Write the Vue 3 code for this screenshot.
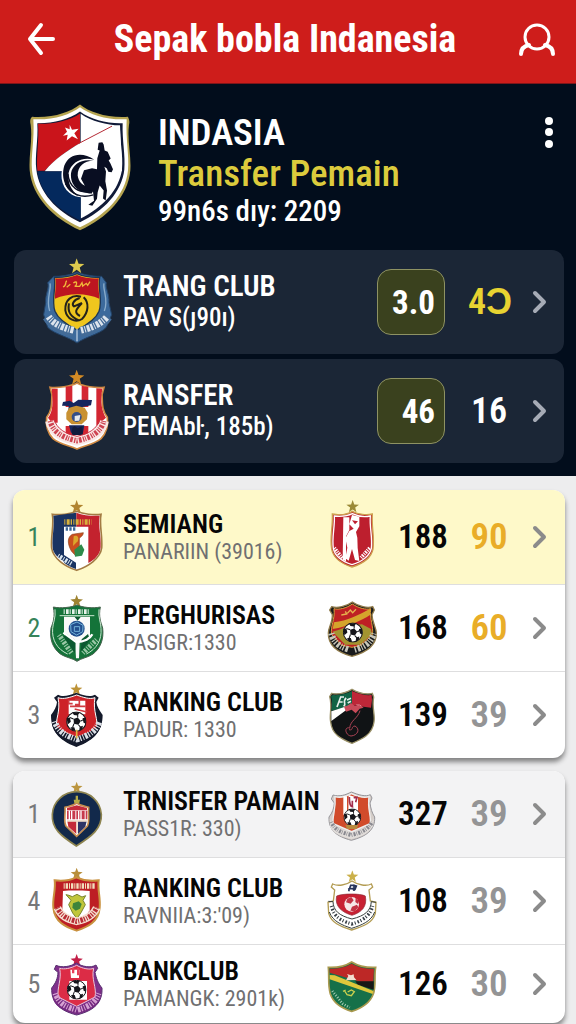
<script setup>
const featured = [
  { crest: 'crest-trang', name: 'TRANG CLUB', detail: 'PAV S(ȷ90ı)', score: '3.0', value: '4Ɔ', gold: true },
  { crest: 'crest-ransfer', name: 'RANSFER', detail: 'PEMAbŀ, 185b)', score: '46', value: '16', gold: false },
]

const groups = [
  {
    id: 'ranking',
    rows: [
      { rank: 1, crest: 'crest-semiang', name: 'SEMIANG', detail: 'PANARIIN (39016)', badge: 'badge-player', points: 188, value: 90, tone: 'gold', green: true },
      { rank: 2, crest: 'crest-perghurisas', name: 'PERGHURISAS', detail: 'PASIGR:1330', badge: 'badge-stripe', points: 168, value: 60, tone: 'gold', green: true },
      { rank: 3, crest: 'crest-ranking', name: 'RANKING CLUB', detail: 'PADUR: 1330', badge: 'badge-tricolor', points: 139, value: 39, tone: 'grey' },
    ],
  },
  {
    id: 'transfer',
    rows: [
      { rank: 1, crest: 'crest-navy', name: 'TRNISFER PAMAIN', detail: 'PASS1R: 330)', badge: 'badge-orange', points: 327, value: 39, tone: 'grey' },
      { rank: 4, crest: 'crest-gold', name: 'RANKING CLUB', detail: "RAVNIIA:3:'09)", badge: 'badge-white', points: 108, value: 39, tone: 'grey' },
      { rank: 5, crest: 'crest-purple', name: 'BANKCLUB', detail: 'PAMANGK: 2901k)', badge: 'badge-green', points: 126, value: 30, tone: 'grey' },
    ],
  },
]
</script>

<template>
  <div class="page">
    <svg class="sprite" aria-hidden="true">
      <symbol id="star" viewBox="0 0 40 40">
        <path d="M20 0 25 14 40 15 28 24 32 39 20 30 8 39 12 24 0 15 15 14Z" />
      </symbol>
      <symbol id="ball" viewBox="0 0 60 60">
        <circle cx="30" cy="30" r="28" fill="#fff" stroke="#15151b" stroke-width="3" />
        <path fill="#15151b" d="M22 22 34 18 43 28 36 39 23 36ZM18 3 40 3 34 12 23 11ZM2 20 11 18 14 30 5 38ZM57 18 48 20 51 33 58 36ZM13 46 24 46 28 57 18 55ZM40 45 49 42 48 51 38 57Z" />
        <path fill="none" stroke="#15151b" stroke-width="3" d="M22 22 11 18M34 18 34 10M43 28 51 24M36 39 42 46M23 36 19 47" />
      </symbol>

      <symbol id="crest-main" viewBox="57 42 306 380">
        <path fill="#b5a450" d="M210 43C238 66 292 84 354 80 356 86 360 92 357 104 351 150 364 196 361 240 354 320 290 384 210 420 130 384 66 320 59 240 56 196 68 150 62 104 59 92 61 86 66 80 130 84 180 66 210 43Z" />
        <path fill="#fff" d="M210 51C240 74 294 90 350 87 347 150 358 196 354 240 347 314 286 376 210 411 134 376 73 314 66 240 62 196 74 150 70 87 128 90 180 74 210 51Z" />
        <path fill="#101a38" d="M210 64C242 88 294 101 338 99 336 150 347 196 343 238 336 306 280 364 210 396 140 364 86 306 79 238 74 196 85 150 82 99 128 100 178 88 210 64Z" />
        <path fill="#fff" d="M212 71C244 94 290 105 330 106 329 150 340 196 336 236 329 300 276 354 212 385Z" />
        <path fill="#ca141b" d="M210 70V159C166 184 134 208 104 242H82C78 196 88 150 84 101 130 102 180 92 210 70Z" />
        <path fill="#fff" d="M212 158 304 108 330 106 336 243H104C134 208 170 182 212 158Z" />
        <path fill="none" stroke="#b52b36" stroke-width="3" d="M206 160 306 108" />
        <path fill="#04295d" d="M82 244H212V391C140 358 92 310 82 244Z" />
        <path fill="#fff" d="M179 104 186 119 206 116 193 129 204 147 186 138 170 151 173 134 159 137 171 125 165 112 179 117Z" />
        <path fill="#fff" d="M254 203C190 174 149 212 155 266 162 315 210 334 252 314Z" />
        <path fill="#090e22" d="M253 209C216 182 176 192 163 226 151 266 168 304 206 318 182 300 172 276 176 248 183 216 218 198 253 209Z" />
        <path fill="#090e22" d="M250 212C216 205 188 222 183 249 180 285 205 309 246 310L254 282C226 297 207 281 203 256 203 229 222 212 250 212Z" />
        <path fill="none" stroke="#090e22" stroke-width="4" d="M166 280C182 312 214 326 250 314M174 252C177 290 205 313 250 302" />
        <path fill="#090e22" d="M265 164 266 158 277 156 281 163 284 181 293 185 302 205 296 211 301 219 309 237 305 246 295 245 290 234 283 230 288 244 286 273 291 301 287 331 279 325 281 301 269 286 263 306 261 326 247 347 235 344 252 332 249 304 227 291 213 266 222 240 246 234 261 237 262 204 269 181 263 179Z" />
      </symbol>

      <symbol id="crest-trang" viewBox="124 53 216 270">
        <use href="#star" x="208" y="57" width="46" height="46" fill="#ddca4e" />
        <path fill="#3c6a9c" stroke="#234266" stroke-width="3" d="M232 98C255 108 290 112 306 111L320 130C316 145 330 165 328 190L336 226 320 264C300 285 258 292 232 311 206 292 164 285 144 264L132 226 138 190C136 165 150 145 144 130L162 111C180 112 210 108 232 98Z" />
        <path fill="none" stroke="#8aaccb" stroke-width="4" d="M151 132C156 150 138 180 150 215M313 132C308 150 328 180 314 215" />
        <path fill="#efc61e" stroke="#1c3556" stroke-width="4" d="M232 103C256 113 284 115 300 114 294 150 310 182 298 216 288 242 258 259 232 272 206 259 176 242 166 216 154 182 170 150 164 114 180 115 210 112 232 103Z" />
        <path fill="#bd1520" d="M232 107C256 117 282 119 297 117 293 140 299 158 299 178 262 160 204 160 166 178 165 158 171 140 167 117 184 119 210 116 232 107Z" />
        <path fill="none" stroke="#f1b83a" stroke-width="4" d="M190 143C204 137 194 126 202 125M201 144 212 135M221 131C236 121 231 139 225 141H240L247 130 249 140 260 132 264 138 271 127" />
        <path fill="none" stroke="#24221c" stroke-width="6" d="M244 172C217 164 195 182 197 213 201 238 226 252 247 239 267 219 269 190 252 174M240 176C219 183 216 196 223 201L247 191M247 191C228 211 222 220 241 230M208 192C202 221 216 233 238 243" />
        <path fill="none" stroke="#436b97" stroke-width="30" d="M143 232C157 256 183 270 222 278M242 278C282 270 307 256 324 232" />
        <path fill="none" stroke="#dce4ed" stroke-width="20" stroke-dasharray="7 4 3 4 9 3" d="M147 232C161 253 187 265 222 273M244 273C278 265 306 252 322 232" />
        <path stroke="#b7cbdf" stroke-width="4" d="M232 268V306" />
      </symbol>

      <symbol id="crest-ransfer" viewBox="124 380 216 270">
        <use href="#star" x="208" y="391" width="46" height="46" fill="#d38b25" />
        <path fill="#fff" stroke="#d18a43" stroke-width="5" d="M232 431C250 441 290 447 313 444L307 466C309 486 304 510 323 534 326 558 321 580 304 598 286 614 257 618 232 629 207 618 178 614 160 598 143 580 138 558 141 534 160 510 155 486 157 466L151 444C174 447 214 441 232 431Z" />
        <path fill="#d32631" d="M156 448 174 448V550L156 550 145 535C161 515 160 490 156 448ZM198 442 218 439V590H198ZM246 439 266 443V590H246ZM290 447 308 448C301 490 307 515 319 535L290 560Z" />
        <path fill="#fff" d="M190 503H274V560H190Z" />
        <path fill="#15265e" d="M190 488 210 484 222 491 236 481 277 482 274 498 248 503 252 515 206 515 207 500 187 499ZM208 558 254 558 250 580 214 580Z" />
        <path fill="#c99132" d="M209 505 230 499 255 505 264 520 262 540 246 555H216L200 540V520Z" />
        <circle cx="231" cy="533" r="15" fill="#344e88" />
        <path fill="#e5e9ef" d="M225 530 242 527 239 544 225 545Z" />
        <path fill="#111b3c" d="M218 565 225 560 234 567 248 560 250 587H216Z" />
        <path fill="none" stroke="#f9e8e5" stroke-width="27" d="M150 545C156 576 184 596 232 605 280 596 308 576 314 545" />
        <path fill="none" stroke="#ce4452" stroke-width="16" stroke-dasharray="3 4 8 4 4 3" d="M152 545C158 576 188 596 232 604 276 596 306 575 312 545" />
        <path fill="none" stroke="#ca3043" stroke-width="3" d="M162 538C172 570 197 583 232 591 267 583 292 570 302 538" />
      </symbol>

      <symbol id="crest-semiang" viewBox="142 57 180 228">
        <use href="#star" x="211" y="60" width="40" height="40" fill="#b18530" />
        <path fill="#fff" stroke="#a37b43" stroke-width="5" d="M231 94C250 102 282 106 304 103 298 134 309 166 306 204 302 236 264 260 231 271 198 260 160 236 156 204 153 166 164 134 158 103 180 106 212 102 231 94Z" />
        <path fill="#193362" d="M161 107 230 98V140H193V245C174 233 160 220 159 202 157 166 165 140 161 107Z" />
        <path fill="#c3222e" d="M230 98C250 106 282 109 300 107 295 140 305 166 303 202 301 225 284 240 266 249V140H230Z" />
        <path fill="#193362" d="M193 225 229 248V267C215 263 203 255 193 248Z" />
        <path fill="none" stroke="#d7b13c" stroke-width="16" stroke-dasharray="3 4 9 3 4 4" d="M194 126H276" />
        <path fill="none" stroke="#3e6896" stroke-width="10" stroke-dasharray="7 4" d="M198 147H229" />
        <path fill="#ca4e1f" stroke="#8d451e" stroke-width="2" d="M215 213C203 191 202 172 218 163L251 158C250 171 239 170 239 177L239 217 225 224Z" />
        <path fill="#dba72c" d="M222 169C234 164 239 173 234 184L220 198Z" />
        <path fill="#2e8a4a" d="M224 209 245 193 254 209 247 227 226 230Z" />
        <path fill="none" stroke="#d9e5ee" stroke-width="14" stroke-dasharray="3 4 7 4" d="M175 227 215 251" />
      </symbol>

      <symbol id="crest-perghurisas" viewBox="142 333 180 228">
        <use href="#star" x="211" y="347" width="40" height="38" fill="#9f8432" />
        <path fill="#147339" stroke="#46624d" stroke-width="3" d="M232 378C248 385 280 389 302 384 296 414 304 430 309 447 313 482 302 508 280 525 264 536 246 537 232 547 218 537 198 536 182 525 160 508 149 482 154 447 160 430 167 414 161 384 183 389 216 385 232 378Z" />
        <path fill="none" stroke="#cae6d0" stroke-width="3" d="M166 391C169 416 160 431 159 448 156 483 172 510 204 525M298 391C295 416 304 431 304 448 307 483 291 510 260 525M180 410H284" />
        <path fill="none" stroke="#e7f2ea" stroke-width="14" stroke-dasharray="3 4 8 3" d="M192 398H270" />
        <path fill="#f9faf9" d="M193 413H271V476L240 488 238 538H229L226 486 193 470Z" />
        <path fill="#0b5830" d="M225 414H243L234 425ZM197 463 228 484 226 523C210 502 202 486 191 475ZM265 465 246 481 243 520 271 482Z" />
        <circle cx="231" cy="449" r="24" fill="#214e8d" />
        <path fill="none" stroke="#74b3d9" stroke-width="3" d="M213 437 232 429 250 439 249 458 231 468 214 458ZM224 443H240V457H224Z" />
        <path fill="none" stroke="#fff" stroke-width="7" d="M191 461 230 489M230 489C254 489 272 478 278 466" />
        <path fill="none" stroke="#9ac7a6" stroke-width="15" stroke-dasharray="3 4 7 4" d="M178 468 215 522M250 522 292 481" />
      </symbol>

      <symbol id="crest-ranking" viewBox="142 592 180 228">
        <use href="#star" x="211" y="611" width="38" height="36" fill="#bd9338" />
        <path fill="#141a2b" d="M230 639C250 646 270 654 286 645L297 654 290 667C291 681 300 692 309 706 308 752 288 780 230 802 174 780 154 752 154 706 164 692 171 681 172 667L163 654 175 645C190 654 210 646 230 639Z" />
        <path fill="#cd2228" stroke="#fff" stroke-width="3" d="M231 646C250 653 270 660 286 654 278 696 298 720 290 747L232 776 171 745C166 718 184 696 175 654 191 660 212 653 231 646Z" />
        <path fill="#fff" d="M207 663H257V704H207Z" />
        <path fill="none" stroke="#d13b42" stroke-width="5" d="M207 660V672H219M226 659H239V675H226M211 680H258M225 688 262 697" />
        <use href="#ball" x="199" y="695" width="62" height="62" />
        <path fill="#141a2b" d="M156 709C166 748 194 761 231 771 270 761 299 745 307 709L304 738C295 767 265 788 231 799 196 788 166 767 158 738Z" />
        <path fill="none" stroke="#dce0e6" stroke-width="18" stroke-dasharray="3 4 8 3 4 5" d="M165 725C176 758 201 768 231 779 264 769 290 756 299 725" />
        <path stroke="#dfb541" stroke-width="5" d="M231 750V776" />
      </symbol>

      <symbol id="crest-navy" viewBox="142 48 180 228">
        <use href="#star" x="212" y="65" width="38" height="35" fill="#bb953f" />
        <path fill="#12294b" stroke="#8d8450" stroke-width="5" d="M231 95C270 95 302 124 305 163 307 206 276 229 230 258 185 229 155 206 158 163 160 124 193 95 231 95Z" />
        <path fill="#fff" stroke="#c78d50" stroke-width="5" d="M231 129C244 139 257 139 267 142 265 165 271 183 263 198L231 229 199 198C191 183 198 165 196 142 207 139 219 139 231 129Z" />
        <path fill="#c42b3a" d="M202 144 231 136 262 144V151H202ZM203 184H230V222L206 200Z" />
        <path fill="#2e3566" d="M235 184H261L257 200 235 222Z" />
        <path fill="none" stroke="#c7394c" stroke-width="25" stroke-dasharray="5 4 3 4 9 3" d="M202 165H265" />
        <path fill="none" stroke="#ead5c1" stroke-width="4" d="M202 183H262M232 183V219" />
        <path fill="#b6ab46" d="M222 119H241L239 129H224ZM228 107H235V122H228Z" />
      </symbol>

      <symbol id="crest-gold" viewBox="142 307 180 228">
        <use href="#star" x="212" y="321" width="38" height="36" fill="#b88f3c" />
        <path fill="#bd1e24" stroke="#c9913f" stroke-width="6" d="M230 350C250 359 278 362 297 359 293 388 303 410 300 441 297 485 263 499 231 510 198 499 165 485 161 441 158 410 169 388 165 359 187 362 211 359 230 350Z" />
        <path fill="none" stroke="#f2dfbd" stroke-width="16" stroke-dasharray="3 3 7 3" d="M192 376H286" />
        <path fill="#fff" d="M190 391C210 389 240 389 270 391V449L258 467 231 477 204 467 188 449Z" />
        <path fill="#c0c63a" stroke="#7a8630" stroke-width="3" d="M208 404 218 408 232 401 247 409 258 405 250 419 257 432 244 456 232 474 219 457 207 432 214 419 199 402Z" />
        <path fill="#3d843b" d="M220 428 237 422 246 430 241 444 228 450 218 441Z" />
        <path fill="none" stroke="#f5dfd0" stroke-width="23" d="M173 441C184 467 204 476 231 482 263 476 282 464 291 441" />
        <path fill="none" stroke="#b82c34" stroke-width="15" stroke-dasharray="3 4 8 3 4 4" d="M173 441C184 467 206 476 231 482 262 476 281 464 291 441" />
      </symbol>

      <symbol id="crest-purple" viewBox="142 555 180 228">
        <use href="#star" x="211" y="579" width="40" height="37" fill="#c31f48" />
        <path fill="#80308b" stroke="#573070" stroke-width="3" d="M230 606C248 617 273 622 289 612L294 622 286 634C290 652 294 665 307 681 309 722 287 748 231 762 176 748 155 722 156 681 169 665 174 652 175 634L164 625 169 613C187 621 212 617 230 606Z" />
        <path fill="#dc2c46" stroke="#e9c7da" stroke-width="3" d="M231 613C249 623 270 627 282 622 274 655 292 680 286 708L231 736 176 708C171 680 187 655 180 622 194 626 213 622 231 613Z" />
        <path fill="#fff" d="M212 626H239L238 651H214ZM209 660H262V716H209Z" />
        <path fill="#e7405a" d="M217 621H224V637H217ZM232 621H238V643H232Z" />
        <use href="#ball" x="201" y="656" width="60" height="60" />
        <path fill="#742a80" d="M158 684C167 719 197 730 231 738 267 730 294 717 304 684L302 714C290 742 263 752 231 759 199 752 170 742 160 714Z" />
        <path fill="none" stroke="#d6a1d2" stroke-width="17" stroke-dasharray="3 4 8 3 4 5" d="M167 697C178 730 202 738 231 747 264 738 287 727 297 697" />
      </symbol>

      <symbol id="badge-player" viewBox="84 57 162 228">
        <use href="#star" x="147" y="60" width="40" height="38" fill="#9b8a36" />
        <path fill="#bd1f2e" stroke="#cda04e" stroke-width="4" d="M166 94C183 104 210 106 226 102 223 142 233 170 228 207 222 237 197 251 165 261 134 251 109 237 104 207 98 170 108 142 106 102 125 106 150 104 166 94Z" />
        <path fill="none" stroke="#fff" stroke-width="4" d="M166 101C185 110 208 111 220 108 217 142 227 170 223 205 217 231 193 245 165 254 138 245 114 231 109 205 104 170 114 142 112 108 130 110 150 109 166 101Z" />
        <path fill="#fff" d="M139 112H157V150L147 169V244L137 239ZM165 105 187 110V139L177 156 181 173 182 204 187 243 174 240 165 207 155 242 145 235 151 203 145 175 157 153 170 146 157 133Z" />
        <path fill="#bd1f2e" d="M165 121 183 124 174 133Z" />
        <path fill="none" stroke="#fff" stroke-width="11" stroke-dasharray="3 3 5 3" d="M112 204 136 234M192 233 219 203" />
      </symbol>

      <symbol id="badge-stripe" viewBox="84 333 162 228">
        <path fill="#181a1c" stroke="#907b4b" stroke-width="4" d="M166 369C186 383 211 388 227 383L232 393 225 407C225 430 238 446 238 462 239 500 206 521 165 532 124 521 93 500 94 462 94 446 107 430 106 407L98 393 104 383C121 388 147 383 166 369Z" />
        <path fill="#be2024" stroke="#d69f3c" stroke-width="3" d="M166 375C186 388 207 393 221 389 217 421 231 443 226 467L192 499 165 505 134 499 104 467C99 443 115 421 111 389 125 393 148 388 166 375Z" />
        <path fill="#d5a42c" d="M111 430C150 425 187 407 219 389V408C192 425 154 443 107 450Z" />
        <path fill="#a39430" d="M107 458C135 450 140 446 150 440L195 436 222 450 225 466 190 497H145Z" />
        <path fill="none" stroke="#e6b34e" stroke-width="4" d="M133 408 149 405 145 397M151 403 160 393 167 401 177 391" />
        <use href="#ball" x="137" y="430" width="61" height="61" />
        <path fill="none" stroke="#c7c6b9" stroke-width="19" stroke-dasharray="4 5 8 4 3 4" d="M103 463C110 492 130 504 157 512M173 512C204 503 223 490 230 463" />
      </symbol>

      <symbol id="badge-tricolor" viewBox="84 592 162 228">
        <path fill="#101315" stroke="#9a9167" stroke-width="4" d="M165 629C184 640 207 645 226 641L230 652C224 683 235 706 231 727 226 765 196 778 165 791 132 778 105 765 101 727 96 706 107 683 98 651L104 641C123 645 146 640 165 629Z" />
        <path fill="#126345" d="M165 634V680L103 693C106 680 106 664 102 650L107 646C126 648 147 643 165 634Z" />
        <path fill="#bd2738" d="M165 634C186 644 208 648 224 646L225 661 222 684 165 677Z" />
        <path fill="#fff" d="M103 695 163 675 157 684 103 724ZM176 675H188L196 681Z" />
        <path fill="none" stroke="#e8efeb" stroke-width="5" d="M120 682 131 652H141M126 667H137M140 680C151 670 134 672 147 654M150 661 162 656M152 670 162 665" />
        <path fill="#c94b5a" d="M141 681 154 677 162 670 174 679 188 676 200 684 188 687 176 701 164 690 147 696Z" />
        <path fill="none" stroke="#ab4355" stroke-width="3" d="M189 693C182 718 160 721 158 746M158 745C140 740 145 767 162 769 183 767 190 748 174 739 161 740 170 754 156 750" />
      </symbol>

      <symbol id="badge-orange" viewBox="84 48 162 228">
        <path fill="#d5cec9" stroke="#96959a" stroke-width="3" d="M163 96C185 105 206 111 220 104L225 114 219 129C221 145 225 159 233 171 235 211 207 229 163 241 119 229 94 211 96 171 106 159 111 145 112 129L103 117 108 105C127 111 146 105 163 96Z" />
        <path fill="#d14b2b" stroke="#eee" stroke-width="4" d="M163 101C183 110 203 115 216 110 210 151 225 170 219 191L164 215 109 191C104 170 118 151 114 110 128 114 147 110 163 101Z" />
        <path fill="#fff" d="M139 109H150V164H139ZM155 105 183 113V156H154Z" />
        <path fill="none" stroke="#a32d4c" stroke-width="5" d="M157 111C157 131 160 142 169 141M170 113 180 112 176 127M166 122V139" />
        <use href="#ball" x="139" y="145" width="54" height="54" />
        <path fill="#e1ddda" d="M98 175C105 202 134 209 164 217 200 209 223 198 230 175L228 198C212 223 193 230 163 237 132 230 109 221 99 201Z" />
        <path fill="#b78a3f" d="M145 195H184L179 207H150Z" />
        <path fill="none" stroke="#88888f" stroke-width="12" stroke-dasharray="2 4 6 3" d="M103 186C115 213 136 218 163 225 197 217 214 207 225 186" />
      </symbol>

      <symbol id="badge-white" viewBox="84 307 162 228">
        <use href="#star" x="146" y="329" width="40" height="36" fill="#cbb04a" />
        <path fill="#fff" stroke="#b39c53" stroke-width="4" d="M165 361C184 374 208 377 223 370L227 379 216 388 220 421 237 425 235 458C227 486 201 497 164 508 128 497 103 486 95 458L93 425 109 421 113 388 103 379 107 370C123 377 147 374 165 361Z" />
        <path fill="none" stroke="#26345b" stroke-width="5" d="M155 392 161 374H171V391M153 385 170 383M168 373 178 376 174 386 167 386" />
        <path fill="#c82133" stroke="#8c2933" stroke-width="2" d="M119 406C137 398 190 398 205 406 211 437 195 455 165 464 135 455 112 437 119 406Z" />
        <circle cx="164" cy="431" r="22" fill="#f6e8e8" />
        <path fill="#c33445" d="M151 414 163 409 170 419 161 429 147 425ZM165 438 180 432 184 440 174 452 160 450ZM176 412 186 422 183 430 175 424Z" />
        <path fill="none" stroke="#38403c" stroke-width="3" d="M94 422 108 423C109 450 126 465 165 475 205 465 221 450 223 423L237 425M97 454C107 482 134 493 164 503 195 493 223 482 233 454" />
        <path fill="none" stroke="#343c43" stroke-width="10" stroke-dasharray="3 6 5 5" d="M103 436C112 472 136 481 164 490 200 480 220 463 227 436" />
      </symbol>

      <symbol id="badge-green" viewBox="84 555 162 228">
        <path fill="#167049" stroke="#a9994f" stroke-width="5" d="M164 603C185 616 213 620 236 619 231 646 238 673 229 699 218 729 193 742 164 751 134 742 110 729 100 699 92 673 97 646 94 619 117 620 144 616 164 603Z" />
        <path fill="#bd2826" d="M164 608C185 620 213 624 231 623L229 662H190L98 635V623C120 623 144 620 164 608Z" />
        <path fill="#191816" d="M175 661H230V686L182 671Z" />
        <path fill="#dfc73b" d="M98 642 113 643 229 690 227 699 98 655Z" />
        <path fill="#f3ded0" d="M147 658 154 645 150 639 162 643 170 640 171 649 178 657Z" />
        <path fill="none" stroke="#c8cf4e" stroke-width="4" d="M143 690 150 701 163 704 172 692 163 687 152 693M138 691 146 687" />
        <path fill="none" stroke="#a7cdb5" stroke-width="8" stroke-dasharray="3 5" d="M106 690 137 728 158 740" />
      </symbol>
    </svg>

    <header class="topbar">
      <button class="icon-button" type="button" aria-label="Back">
        <svg width="30" height="34" viewBox="0 0 30 34"><path d="M15 3 4 17 15 31M4 17H27" fill="none" stroke="#fff" stroke-width="4" stroke-linecap="round" stroke-linejoin="round" /></svg>
      </button>
      <h1>Sepak bobla Indanesia</h1>
      <button class="icon-button" type="button" aria-label="Profile">
        <svg width="38" height="38" viewBox="0 0 38 38"><g fill="none" stroke="#fff" stroke-linecap="round"><circle cx="19" cy="17" r="12" stroke-width="3" /><path d="M3 34C3 29 6 26 11 25M35 34C35 29 32 26 27 25" stroke-width="4" /></g></svg>
      </button>
    </header>

    <section class="hero">
      <div class="club">
        <svg class="club-crest" aria-hidden="true"><use href="#crest-main" /></svg>
        <div class="club-text">
          <h2>INDASIA</h2>
          <p class="club-subtitle">Transfer Pemain</p>
          <p class="club-meta">99n6s dıy: 2209</p>
        </div>
        <button class="icon-button menu" type="button" aria-label="More options">
          <svg width="10" height="32" viewBox="0 0 10 32" fill="#fff"><circle cx="5" cy="5" r="4" /><circle cx="5" cy="16" r="4" /><circle cx="5" cy="28" r="4" /></svg>
        </button>
      </div>

      <ul class="featured">
        <li v-for="item in featured" :key="item.name">
          <a class="featured-row" href="#">
            <svg class="featured-crest" aria-hidden="true"><use :href="'#' + item.crest" /></svg>
            <span class="label">
              <strong>{{ item.name }}</strong>
              <span>{{ item.detail }}</span>
            </span>
            <span class="score">{{ item.score }}</span>
            <span class="value" :class="{ bright: item.gold }">{{ item.value }}</span>
            <svg class="chevron" viewBox="0 0 16 24"><path d="M3 3 12 12 3 21" /></svg>
          </a>
        </li>
      </ul>
    </section>

    <section class="tables">
      <ol v-for="group in groups" :key="group.id" class="table-card" :class="group.id">
        <li v-for="row in group.rows" :key="row.rank">
          <a class="row" href="#">
            <span class="rank" :class="{ green: row.green }">{{ row.rank }}</span>
            <svg class="crest" aria-hidden="true"><use :href="'#' + row.crest" /></svg>
            <span class="label">
              <strong>{{ row.name }}</strong>
              <span>{{ row.detail }}</span>
            </span>
            <svg class="badge" aria-hidden="true"><use :href="'#' + row.badge" /></svg>
            <span class="points">{{ row.points }}</span>
            <span class="value" :class="row.tone">{{ row.value }}</span>
            <svg class="chevron" viewBox="0 0 16 24"><path d="M3 3 12 12 3 21" /></svg>
          </a>
        </li>
      </ol>
    </section>
  </div>
</template>

<style>
body {
  background: #ededee;
}
</style>

<style scoped>
.page {
  font-family: 'Roboto Condensed', Roboto, 'Liberation Sans', sans-serif;
  color: #060606;
}

.sprite {
  position: absolute;
  width: 0;
  height: 0;
}

h1,
h2,
p,
ul,
ol {
  margin: 0;
  padding: 0;
}

ul,
ol {
  list-style: none;
}

a {
  color: inherit;
  text-decoration: none;
}

svg {
  display: block;
}

.icon-button {
  display: grid;
  place-items: center;
  padding: 0;
  border: 0;
  background: none;
  cursor: pointer;
}

.topbar {
  display: flex;
  align-items: center;
  justify-content: space-between;
  height: 84px;
  padding: 0 20px 6px 26px;
  box-sizing: border-box;
  border-bottom: 1px solid #7e1519;
  background: #ce1d1b;
}

h1 {
  padding-right: 4px;
  color: #fff;
  font-size: 38px;
  line-height: 44px;
  font-weight: 700;
  white-space: nowrap;
}

.hero {
  padding: 16px 12px 13px 14px;
  background: #020d1c;
}

.club {
  display: flex;
  align-items: flex-start;
  padding: 4px 10px 19px 15px;
}

.club-crest {
  width: 102px;
  height: 127px;
}

.club-text {
  flex: 1;
  padding: 8px 0 0 27px;
  color: #fff;
}

h2 {
  font-size: 37px;
  line-height: 42px;
  font-weight: 600;
}

.club-subtitle {
  color: #dccb3c;
  font-size: 37px;
  line-height: 40px;
  font-weight: 500;
}

.club-meta {
  font-size: 29px;
  line-height: 35px;
  font-weight: 500;
}

.menu {
  padding-top: 12px;
}

.featured {
  display: grid;
  gap: 5px;
}

.featured-row {
  display: flex;
  align-items: center;
  height: 104px;
  padding: 0 16px 0 27px;
  border-radius: 12px;
  background: #1b2636;
  color: #fff;
}

.featured-crest {
  width: 72px;
  height: 90px;
}

.label {
  display: flex;
  flex: 1;
  flex-direction: column;
  min-width: 0;
  white-space: nowrap;
}

.label strong {
  font-size: 26px;
  line-height: 30px;
  font-weight: 600;
}

.label span {
  font-size: 22px;
  line-height: 26px;
}

.featured-row .label {
  padding-left: 10px;
}

.featured-row .label strong {
  font-size: 29px;
  line-height: 32px;
}

.featured-row .label span {
  font-size: 25px;
  line-height: 32px;
  font-weight: 500;
}

.score {
  width: 68px;
  height: 66px;
  padding-right: 9px;
  box-sizing: border-box;
  border: 1px solid #8e9263;
  border-radius: 14px;
  background: #3a411e;
  font-size: 33px;
  line-height: 66px;
  font-weight: 700;
  text-align: right;
}

.value {
  width: 42px;
  margin-left: 20px;
  font-size: 37px;
  line-height: 40px;
  font-weight: 600;
  text-align: center;
}

.featured-row .value {
  margin-left: 23px;
  font-size: 36px;
}

.bright {
  color: #e7d331;
}

.chevron {
  width: 16px;
  height: 24px;
  margin-left: 22px;
  fill: none;
  stroke: #8b8b8b;
  stroke-width: 4;
  stroke-linecap: round;
  stroke-linejoin: round;
}

.featured-row .chevron {
  stroke: #a6abb6;
}

.tables {
  display: grid;
  gap: 13px;
  padding: 14px 11px 2px 13px;
}

.table-card {
  overflow: hidden;
  border-radius: 12px;
  background: #fff;
  box-shadow: 0 4px 5px rgb(0 0 0 / 45%);
}

.table-card li + li {
  border-top: 1px solid #dededf;
}

.row {
  display: flex;
  align-items: center;
  height: 86px;
  padding: 0 17px 0 13px;
}

.ranking li:first-child .row {
  height: 94px;
  background: #fef9c9;
}

.transfer li:first-child .row {
  background: #f3f3f4;
}

.transfer li:last-child .row {
  height: 78px;
}

.rank {
  width: 16px;
  margin-right: 5px;
  color: #77787a;
  font-size: 26px;
  text-align: center;
}

.rank.green {
  color: #36845b;
}

.crest {
  width: 60px;
  height: 76px;
}

.row .label {
  padding-left: 16px;
}

.row .label span {
  color: #707071;
}

.badge {
  width: 54px;
  height: 76px;
}

.points {
  width: 50px;
  margin-left: 19px;
  font-size: 33px;
  line-height: 40px;
  font-weight: 600;
  text-align: center;
}

.gold {
  color: #e9ad28;
}

.grey {
  color: #949495;
}
</style>
